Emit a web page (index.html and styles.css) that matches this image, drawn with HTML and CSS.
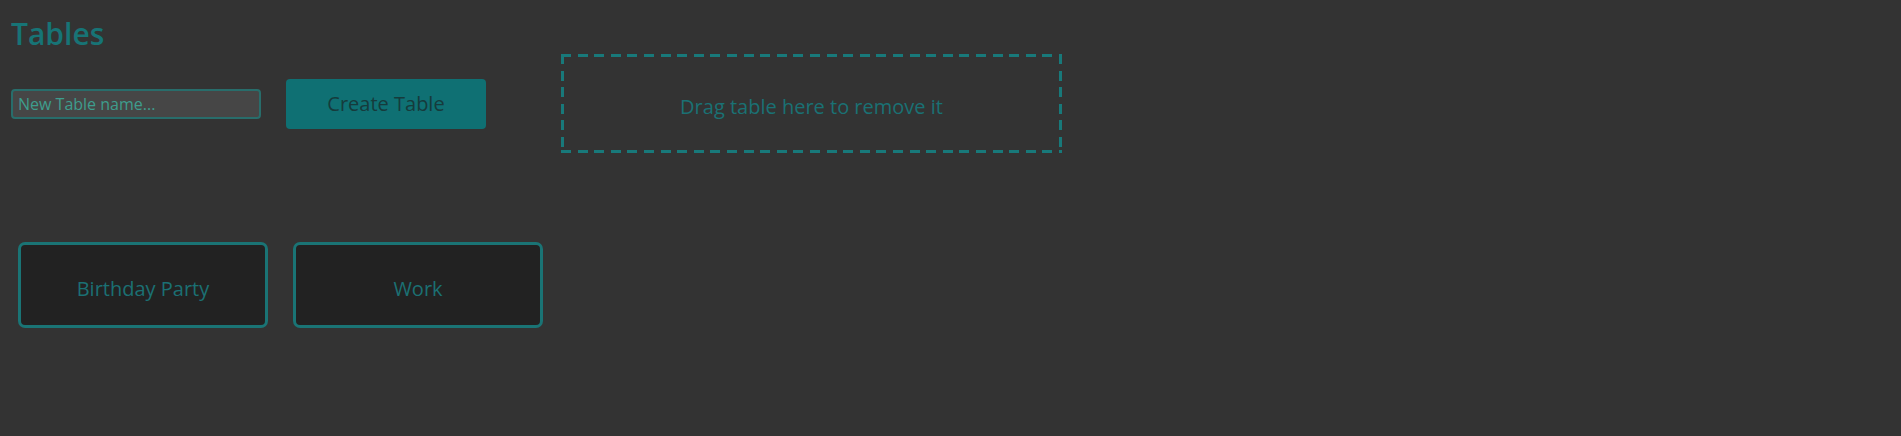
FILE: index.html
```html
<!DOCTYPE html>
<html lang="en">
<head>
<meta charset="utf-8">
<title>Tables</title>
<link rel="stylesheet" href="styles.css">
</head>
<body>
<main class="page">
  <h1 class="title">Tables</h1>
  <div class="toolbar">
    <input class="name-input" type="text" placeholder="New Table name...">
    <button class="create-btn" type="button">Create Table</button>
    <div class="dropzone">Drag table here to remove it</div>
  </div>
  <div class="cards">
    <div class="card">Birthday Party</div>
    <div class="card">Work</div>
  </div>
</main>
</body>
</html>
```

FILE: styles.css
```css
html, body {
  margin: 0;
  padding: 0;
  background: #333333;
}
body {
  font-family: "Open Sans", "Liberation Sans", sans-serif;
  height: 436px;
  overflow: hidden;
}
.page {
  padding: 0 11px;
}
.title {
  margin: 14px 0 0 0;
  font-family: "Open Sans", sans-serif;
  font-weight: 600;
  font-size: 30px;
  line-height: 40px;
  color: #177476;
}
.toolbar {
  display: flex;
  align-items: center;
}
.name-input {
  box-sizing: border-box;
  width: 250px;
  height: 30px;
  margin: 0;
  padding: 0 5px;
  background: #464646;
  border: 2px solid #286d6b;
  border-radius: 4px;
  font-family: "Open Sans", sans-serif;
  font-size: 16px;
  color: #3e9d8d;
  outline: none;
}
.name-input::placeholder {
  color: #3e9d8d;
  opacity: 1;
}
.create-btn {
  box-sizing: border-box;
  width: 200px;
  height: 50px;
  margin: 0 0 0 25px;
  padding: 0;
  border: none;
  border-radius: 4px;
  background: #0f7073;
  color: #163b3c;
  font-family: "Open Sans", sans-serif;
  font-size: 20px;
}
.dropzone {
  box-sizing: border-box;
  width: 501px;
  height: 99px;
  margin-left: 75px;
  background:
    repeating-linear-gradient(90deg, #18797a 0 10px, transparent 10px 16.6px) left top / 100% 3px no-repeat,
    repeating-linear-gradient(90deg, #18797a 0 10px, transparent 10px 16.6px) left bottom / 100% 3px no-repeat,
    repeating-linear-gradient(180deg, #18797a 0 10px, transparent 10px 16.6px) left top / 3px 100% no-repeat,
    repeating-linear-gradient(180deg, #18797a 0 10px, transparent 10px 16.6px) right top / 3px 100% no-repeat;
  display: flex;
  align-items: center;
  justify-content: center;
  padding-top: 5px;
  color: #1a7174;
  font-size: 20px;
}
.cards {
  display: flex;
  gap: 25px;
  margin-top: 89px;
  padding-left: 7px;
}
.card {
  box-sizing: border-box;
  width: 250px;
  height: 86px;
  border: 3px solid #1a7475;
  border-radius: 7px;
  background: #222222;
  display: flex;
  align-items: center;
  justify-content: center;
  padding-top: 6px;
  color: #1b7073;
  font-size: 20px;
}
```
